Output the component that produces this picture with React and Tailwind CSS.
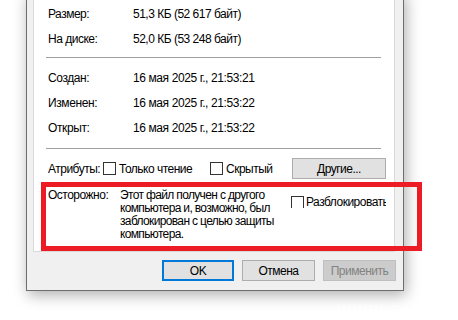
import React from "react";

const Row = ({ label, value }) => (
  <div className="flex items-center h-[25px]">
    <div className="w-[85px] shrink-0">{label}</div>
    <div>{value}</div>
  </div>
);

const Check = () => (
  <span className="inline-block w-[13px] h-[13px] border border-[#333333] bg-white shrink-0" />
);

export default function App() {
  return (
    <div
      className="relative w-[458px] h-[320px] bg-white overflow-hidden text-[12px] text-black tracking-[-0.5px]"
      style={{ fontFamily: '"Liberation Sans", Arial, sans-serif' }}
    >
      <div className="ml-[26px] -mt-[8px] w-[378px] h-[299px] bg-[#f0f0f0] border border-[#6d6d6d] shadow-[2px_4px_14px_rgba(0,0,0,0.32)] flex flex-col">
        <div className="ml-[6px] w-[362px] h-[259px] bg-white border border-[#d9d9d9] pl-[14px] pt-[7px] flex flex-col">
          <Row label="Размер:" value="51,3 КБ (52 617 байт)" />
          <Row label="На диске:" value="52,0 КБ (53 248 байт)" />
          <div className="ml-[-2px] mt-[6px] w-[335px] h-px bg-[#a0a0a0]" />
          <div className="mt-[7px] tracking-[-0.4px]">
            <Row label="Создан:" value="16 мая 2025 г., 21:53:21" />
            <Row label="Изменен:" value="16 мая 2025 г., 21:53:22" />
            <Row label="Открыт:" value="16 мая 2025 г., 21:53:22" />
          </div>
          <div className="ml-[-2px] mt-[8px] w-[335px] h-px bg-[#a0a0a0]" />
          <div className="mt-[9px] h-[21px] flex items-center">
            <span className="w-[55px] shrink-0">Атрибуты:</span>
            <Check />
            <span className="ml-[3px] w-[91px] shrink-0">Только чтение</span>
            <Check />
            <span className="ml-[3px] w-[66px] shrink-0">Скрытый</span>
            <div className="w-[94px] h-[21px] bg-[#e1e1e1] border border-[#adadad] flex items-center justify-center">
              Другие...
            </div>
          </div>
          <div className="mt-[10px] flex">
            <div className="w-[72px] shrink-0 leading-[13px]">Осторожно:</div>
            <div className="w-[165px] shrink-0 leading-[13px] tracking-[-0.65px]">
              Этот файл получен с другого компьютера и, возможно, был заблокирован с целью защиты компьютера.
            </div>
            <div className="ml-[6px] mt-[7px] w-[95px] h-[12px] flex items-center overflow-hidden whitespace-nowrap">
              <Check />
              <span className="ml-[2px]">Разблокировать</span>
            </div>
          </div>
        </div>
        <div className="mt-[8px] pr-[7px] flex justify-end gap-[8px]">
          <div className="w-[72px] h-[21px] bg-[#e1e1e1] border-2 border-[#0078d7] flex items-center justify-center">
            OK
          </div>
          <div className="w-[73px] h-[21px] bg-[#e1e1e1] border border-[#adadad] flex items-center justify-center">
            Отмена
          </div>
          <div className="w-[73px] h-[21px] bg-[#cccccc] border border-[#bfbfbf] text-[#838383] flex items-center justify-center">
            Применить
          </div>
        </div>
      </div>
      <div className="absolute left-[41px] top-[182px] w-[381px] h-[69px] border-[5px] border-[#ed1c24]" />
      <div
        className="absolute left-[337px] top-[297px] text-[17px] tracking-[2px] text-white opacity-90 whitespace-nowrap"
        style={{ fontFamily: '"DejaVu Sans", sans-serif' }}
      >
        www.excelworld.ru
      </div>
    </div>
  );
}
